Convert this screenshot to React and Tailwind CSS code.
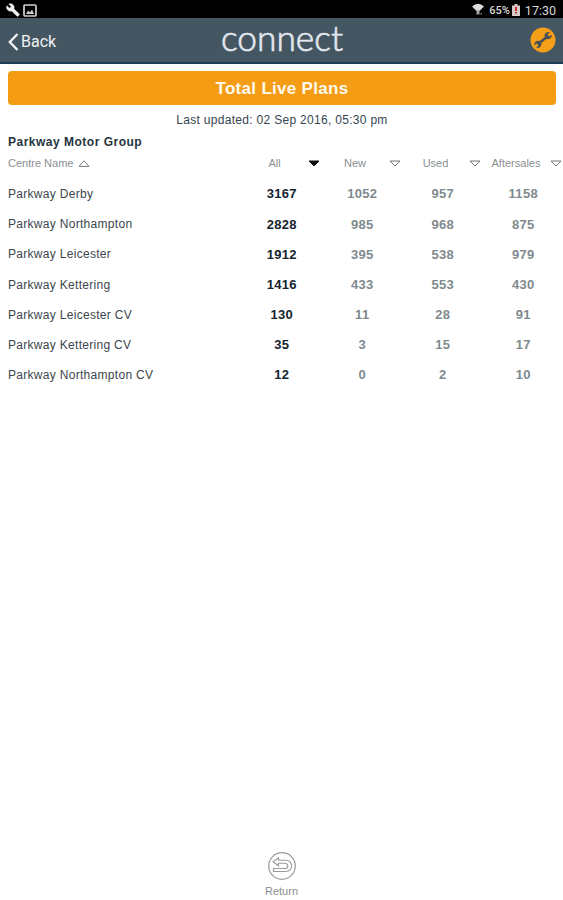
const columns = ["All", "New", "Used", "Aftersales"];

const rows = [
  ["Parkway Derby", 3167, 1052, 957, 1158],
  ["Parkway Northampton", 2828, 985, 968, 875],
  ["Parkway Leicester", 1912, 395, 538, 979],
  ["Parkway Kettering", 1416, 433, 553, 430],
  ["Parkway Leicester CV", 130, 11, 28, 91],
  ["Parkway Kettering CV", 35, 3, 15, 17],
  ["Parkway Northampton CV", 12, 0, 2, 10],
];

function StatusBar() {
  return (
    <div className="flex h-[18px] items-center bg-black pl-[6px] pr-[7px] pt-[2px] font-[Roboto,sans-serif] text-[#d8d8d8]">
      <svg className="h-[14px] w-[14px]" viewBox="0 0 24 24" fill="#f2f2f2" stroke="#f2f2f2" strokeWidth="0.8">
        <path d="M22.7 19l-9.1-9.1c.9-2.3.4-5-1.5-6.9-2-2-5-2.4-7.4-1.3L9 6 6 9 1.6 4.7C.4 7.1.9 10.1 2.9 12.1c1.9 1.9 4.6 2.4 6.9 1.5l9.1 9.1c.4.4 1 .4 1.4 0l2.3-2.3c.5-.4.5-1.1.1-1.4z" />
      </svg>
      <svg className="ml-[3px] h-[13px] w-[14px]" viewBox="0 0 14 13" fill="none" stroke="#d0d0d0" strokeWidth="1.7">
        <rect x="1" y="1" width="12" height="11" rx="1" />
        <path d="M3 10 L5.3 6.5 L7 8.5 L9 5.5 L11 10 Z" fill="#d0d0d0" stroke="none" />
      </svg>
      <div className="ml-auto flex items-center">
        <svg className="mb-[2px] h-[12px] w-[12px]" viewBox="0 0 12 12" fill="#dcdcdc">
          <path d="M0 3.5 Q6 -2 12 3.5 L7.5 8 H4.5 Z" />
          <path d="M4.5 7h3v4.5h-3z" fill="#a5a5a5" />
          <path d="M8.5 10h1.5v1.5H8.5z" fill="#777" />
        </svg>
        <span className="ml-[5px] text-[11px] font-medium leading-none">65%</span>
        <svg className="ml-[2px] h-[12px] w-[8px]" viewBox="0 0 8 12">
          <path d="M2.5 0h3v1.5H8V12H0V1.5h2.5z" fill="#d6c9c9" />
          <path d="M3 3h2v4H3zM3 8h2v1.5H3z" fill="#d02a30" />
        </svg>
        <span className="ml-[5px] pt-[2px] text-[12.5px] leading-none">17:30</span>
      </div>
    </div>
  );
}

function Header() {
  return (
    <header className="grid h-[46px] grid-cols-[1fr_auto_1fr] items-center border-b-2 border-[#1d3c54] bg-[#455663] pl-[8px] pr-[7px] font-[Roboto,sans-serif]">
      <div className="flex items-center pt-[3px]">
        <svg className="h-[18px] w-[11px]" viewBox="0 0 11 18" fill="none" stroke="#f4f8fa" strokeWidth="2.3">
          <path d="M9.5 1 L1.8 9 L9.5 17" />
        </svg>
        <span className="ml-[2px] text-[16px] leading-none text-[#eef2f5]">Back</span>
      </div>
      <svg className="h-[44px] w-[122px] overflow-visible" viewBox="0 0 122 44">
        <text
          x="0"
          y="33"
          textLength="122"
          lengthAdjust="spacingAndGlyphs"
          strokeWidth="0.7"
          className="fill-[#e2e7ee] stroke-[#e2e7ee] font-[Lato,sans-serif] text-[35px] font-light"
        >
          connect
        </text>
      </svg>
      <svg className="h-[26px] w-[26px] justify-self-end" viewBox="0 0 26 26">
        <circle cx="13" cy="13" r="12.5" fill="#f59e17" />
        <g transform="rotate(-40 13 13)" fill="#455056">
          <rect x="7" y="11.7" width="12" height="2.6" />
          <circle cx="6.3" cy="13" r="3.4" />
          <circle cx="19.7" cy="13" r="3.4" />
          <path d="M2 11.6 H6 V14.4 H2 Z M24 11.6 H20 V14.4 H24 Z" fill="#f59e17" />
        </g>
      </svg>
    </header>
  );
}

function SortArrow({ up = false, active = false }) {
  return (
    <svg className="h-[7px] w-[12px] shrink-0" viewBox="0 0 12 7" strokeWidth="1" stroke={active ? "#111" : "#777"} fill={active ? "#111" : "none"}>
      {up ? <path d="M1 6.4 L6 .8 L11 6.4 Z" /> : <path d="M1 1 H11 L6 6 Z" />}
    </svg>
  );
}

const grid = "grid grid-cols-[233px_80.5px_80.5px_80.5px_80.5px]";

export default function App() {
  return (
    <div className="flex h-[900px] w-[563px] flex-col overflow-hidden bg-white font-['Liberation_Sans',Arial,sans-serif]">
      <StatusBar />
      <Header />
      <main className="flex flex-1 flex-col pl-[8px]">
        <h1 className="mr-[7px] mt-[7px] h-[34px] rounded-[4px] bg-[#f39c14] text-center text-[17px] font-bold leading-[35px] tracking-[0.3px] text-[#fffaf0]">
          Total Live Plans
        </h1>
        <p className="mr-[7px] mt-[7px] text-center text-[12px] leading-[16px] tracking-[0.3px] text-[#344550]">
          Last updated: 02 Sep 2016, 05:30 pm
        </p>
        <h2 className="mt-[6px] text-[12px] font-bold leading-[16px] tracking-[0.5px] text-[#24343f]">Parkway Motor Group</h2>
        <div className={`${grid} mt-[5px] h-[16px] text-[11px] leading-[16px] text-[#8a8e91]`}>
          <div className="flex items-center gap-[5px]">
            Centre Name <SortArrow up />
          </div>
          {columns.map((name, i) => (
            <div key={name} className="flex items-center">
              <span className="w-[67px] text-center">{name}</span>
              <SortArrow active={i === 0} />
            </div>
          ))}
        </div>
        <div className="mt-[8px]">
          {rows.map(([name, ...values]) => (
            <div key={name} className={`${grid} h-[30.2px] items-center`}>
              <span className="text-[12px] tracking-[0.3px] text-[#3b464d]">{name}</span>
              {values.map((value, i) => (
                <span
                  key={i}
                  className={`pl-[1px] text-center text-[13px] font-bold tracking-[0.3px] ${i === 0 ? "text-[#14232e]" : "text-[#808a8e]"}`}
                >
                  {value}
                </span>
              ))}
            </div>
          ))}
        </div>
        <div className="mb-[1px] mr-[8px] mt-auto flex flex-col items-center">
          <svg className="h-[30px] w-[30px]" viewBox="0 0 30 30" fill="none" stroke="#9a9a9a">
            <circle cx="15" cy="15" r="13.3" strokeWidth="1.2" />
            <path d="M11.5 9.3 V6.8 L6 10.8 L11.5 14.8 V12.3 H18.2 A2.6 2.6 0 0 1 18.2 17.5 H6.5 V20.5 H19 A5.6 5.6 0 0 0 19 9.3 Z" strokeWidth="1.1" />
          </svg>
          <span className="mt-[2px] text-[11px] leading-[16px] text-[#8a8e91]">Return</span>
        </div>
      </main>
    </div>
  );
}
